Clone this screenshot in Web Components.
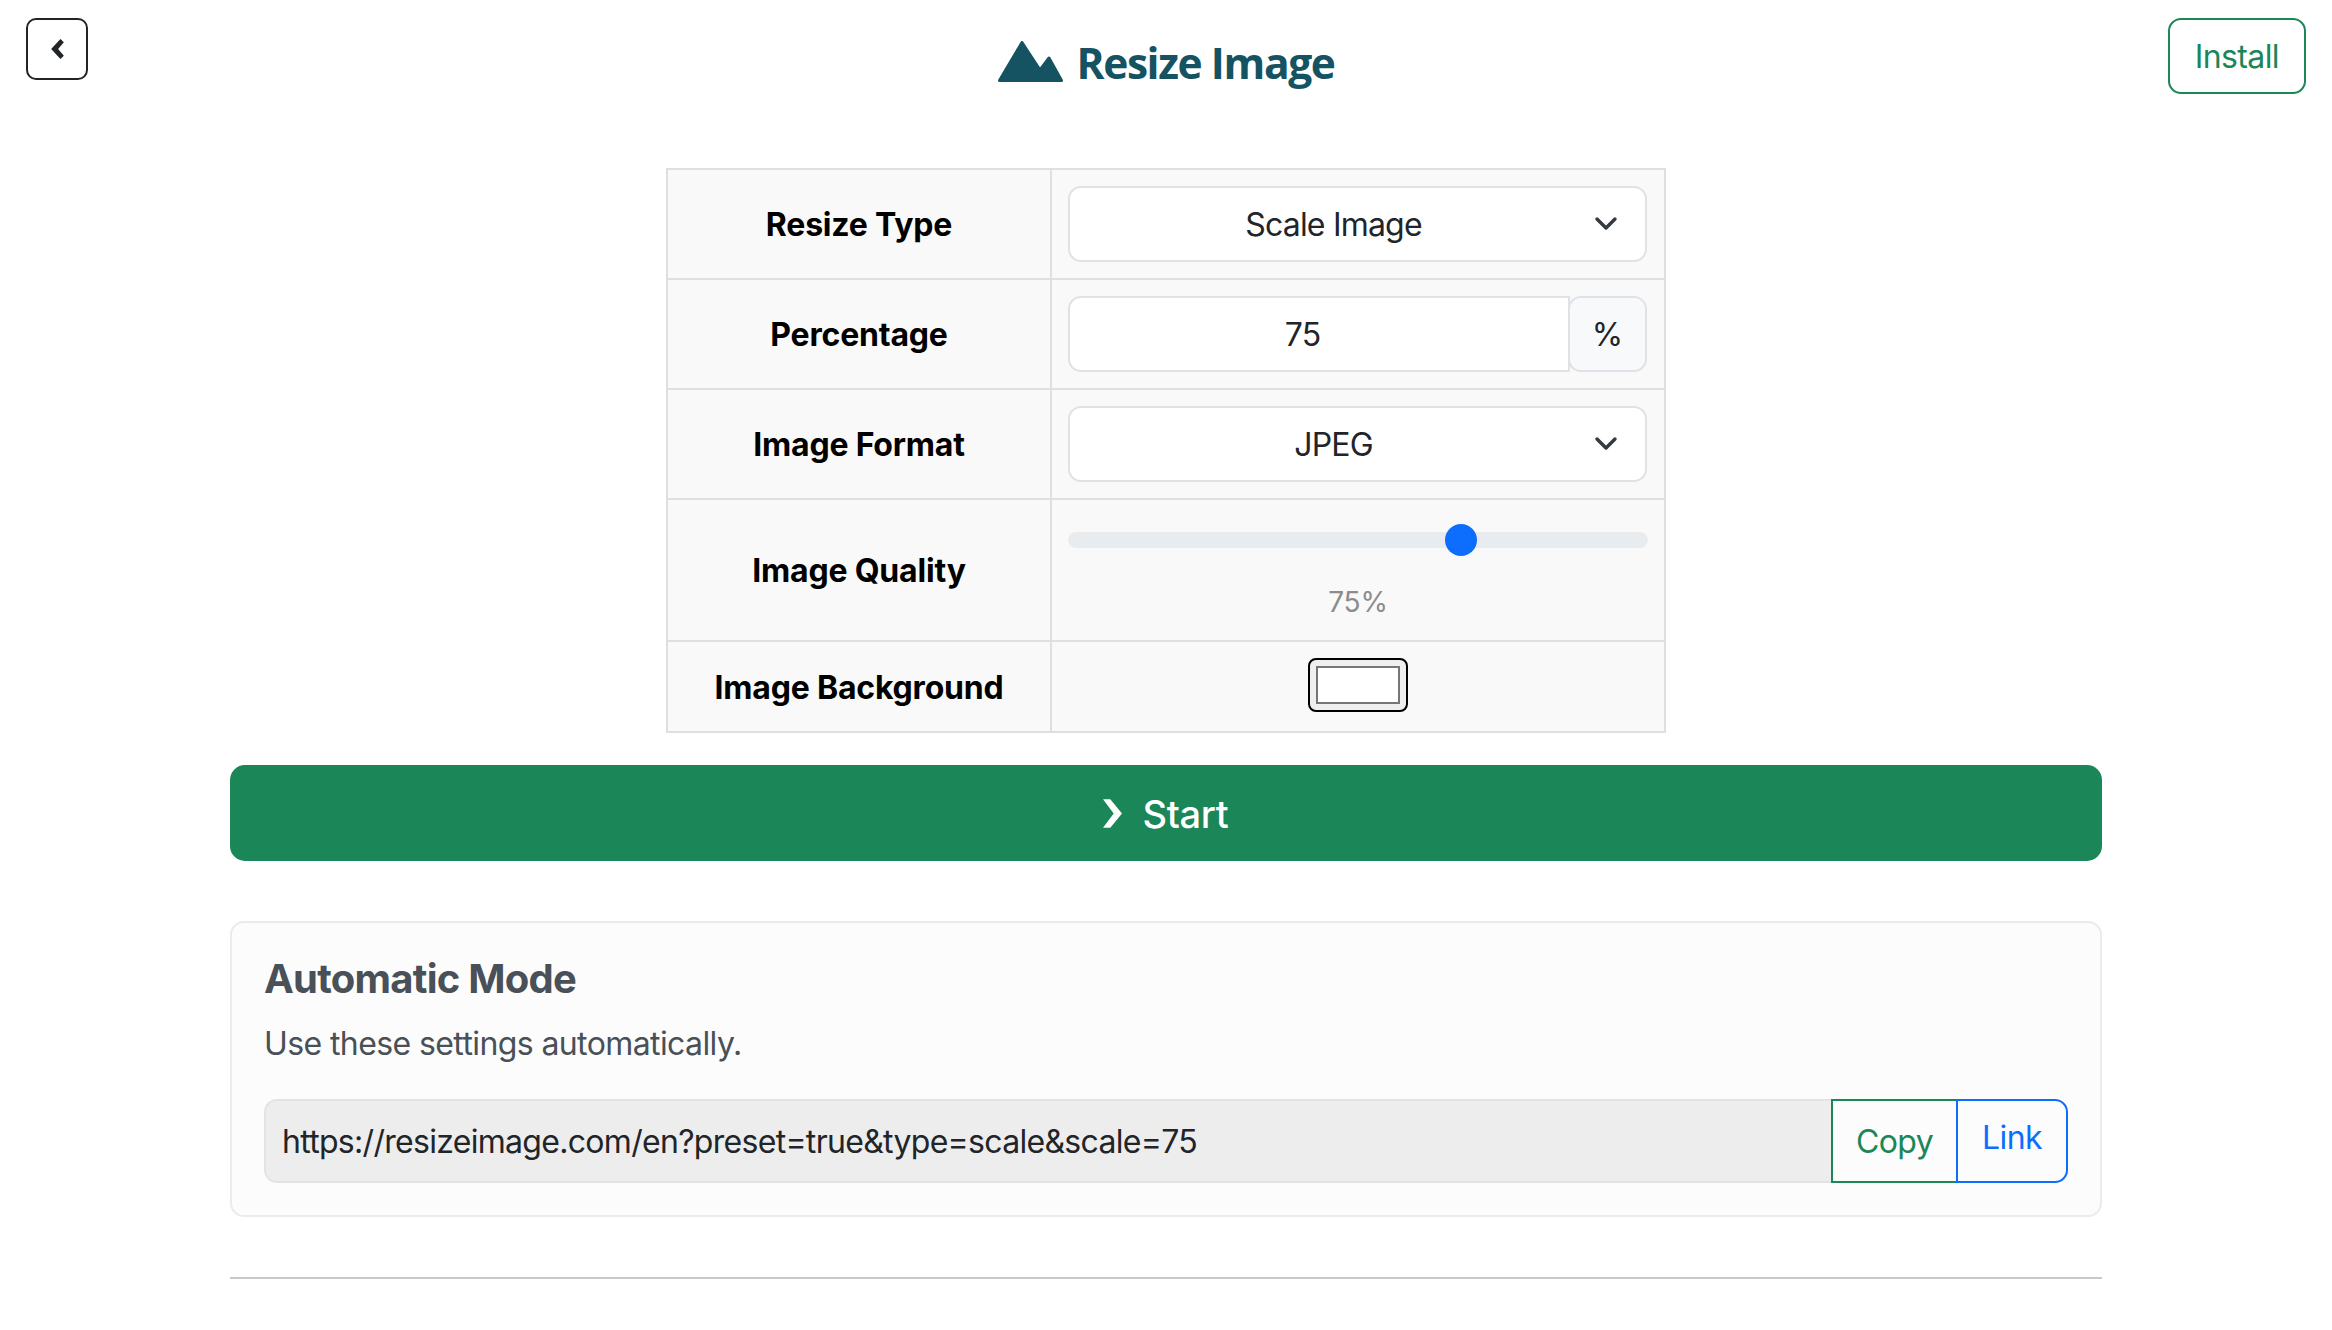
<!DOCTYPE html>
<html lang="en">
<head>
<meta charset="utf-8">
<title>Resize Image</title>
<style>
  html, body { margin: 0; padding: 0; background: #fff; }
  body { font-family: Inter, "Liberation Sans", sans-serif; font-size: 32px; line-height: 48px; color: #212529; }
</style>
</head>
<body>
<x-app>
  <x-header></x-header>
  <x-settings>
    <x-row label="Resize Type"><x-select>Scale Image</x-select></x-row>
    <x-row label="Percentage"><x-number value="75" unit="%"></x-number></x-row>
    <x-row label="Image Format"><x-select>JPEG</x-select></x-row>
    <x-row label="Image Quality"><x-quality value="75"></x-quality></x-row>
    <x-row label="Image Background"><x-swatch></x-swatch></x-row>
  </x-settings>
  <x-start>Start</x-start>
  <x-auto-card url="https://resizeimage.com/en?preset=true&amp;type=scale&amp;scale=75"></x-auto-card>
  <x-rule></x-rule>
</x-app>
<script>
function def(name, css, html, setup) {
  customElements.define(name, class extends HTMLElement {
    constructor() {
      super();
      const root = this.attachShadow({ mode: 'open' });
      root.innerHTML = '<style>' + css + '</style>' + html;
    }
    connectedCallback() { if (setup) setup(this, this.shadowRoot); }
  });
}

def('x-app', `
  :host { display: block; width: 1872px; margin: 0 auto; }
`, `<slot></slot>`);

def('x-header', `
  :host { display: grid; grid-template-columns: 1fr auto 1fr; align-items: start; height: 150px; padding-top: 18px;
          margin: 0 -230px; padding-left: 26px; padding-right: 26px; }
  .back { box-sizing: border-box; width: 62px; height: 62px; border: 2px solid #212529; border-radius: 10px;
          display: flex; align-items: center; justify-content: center; background: #fff; }
  .logo { display: flex; align-items: flex-start; gap: 14px; padding-top: 23px; }
  .logo span { font: 700 42.5px/48px "Open Sans", sans-serif; letter-spacing: -1.4px; color: #155362; margin-top: -2px; white-space: nowrap; }
  .install { justify-self: end; box-sizing: border-box; height: 76px; padding: 13px 25px 0; border: 2px solid #1b8657;
             border-radius: 13px; color: #1b8657; font-size: 32px; line-height: 48px; letter-spacing: -0.6px; }
`, `
  <div class="back"><svg width="13" height="20" viewBox="0 0 12.7 20"><polygon fill="#212529" points="0,10 9.3,0 12.7,3.3 7,10 12.7,16.7 9.3,20"/></svg></div>
  <div class="logo">
    <svg width="65" height="41" viewBox="0 0 65 41"><path fill="#155362" stroke="#155362" stroke-width="3" stroke-linejoin="round" d="M1.5 39.5 24 1.5 42 29 51 17 63.5 39.5Z"/></svg>
    <span>Resize Image</span>
  </div>
  <div class="install">Install</div>
`);

def('x-settings', `
  :host { display: block; box-sizing: border-box; width: 1000px; margin: 0 auto; border: 2px solid #dfdfdf; background: #f9f9f9; }
`, `<slot></slot>`);

def('x-row', `
  :host { display: grid; grid-template-columns: 382px 1fr; border-bottom: 2px solid #dfdfdf; }
  :host(:last-child) { border-bottom: 0; }
  .label { display: flex; align-items: center; justify-content: center; font-weight: 700; color: #000; letter-spacing: -0.2px; padding-top: 2px; }
  .value { box-sizing: border-box; border-left: 2px solid #dfdfdf; padding: 16px; min-width: 0; }
`, `<div class="label"></div><div class="value"><slot></slot></div>`,
(el, root) => { root.querySelector('.label').textContent = el.getAttribute('label'); });

def('x-select', `
  :host { display: flex; box-sizing: border-box; height: 76px; margin-right: 1px; align-items: center; background: #fff; border: 2px solid #dfe2e6;
          border-radius: 13px; padding: 0 27px 0 22px; color: #212529; letter-spacing: -0.8px; }
  .t { flex: 1; text-align: center; padding-top: 2px; }
  svg { margin-left: 19px; flex: none; }
`, `<div class="t"><slot></slot></div>
    <svg width="24" height="16" viewBox="0 0 24 16"><path d="M3 3l9 9 9-9" fill="none" stroke="#343a40" stroke-width="3.4" stroke-linecap="round" stroke-linejoin="round"/></svg>`);

def('x-number', `
  :host { display: flex; height: 76px; margin-right: 1px; }
  .in { box-sizing: border-box; width: 502px; background: #fff; border: 2px solid #dfe2e6; border-radius: 13px 0 0 13px;
        display: flex; align-items: center; justify-content: center; padding: 2px 55px 0 22px; letter-spacing: -0.8px; }
  .un { box-sizing: border-box; flex: 1; margin-left: -2px; background: #f8f9fa; border: 2px solid #dfe2e6; border-radius: 13px;
        display: flex; align-items: center; justify-content: center; padding-top: 2px; }
`, `<div class="in"></div><div class="un"></div>`,
(el, root) => {
  root.querySelector('.in').textContent = el.getAttribute('value');
  root.querySelector('.un').textContent = el.getAttribute('unit');
});

def('x-quality', `
  :host { display: block; height: 108px; }
  input { -webkit-appearance: none; appearance: none; display: block; width: 100%; height: 48px; margin: 0; padding: 0; background: transparent; }
  input::-webkit-slider-runnable-track { height: 16px; background: #e9ecef; border-radius: 16px; }
  input::-webkit-slider-thumb { -webkit-appearance: none; appearance: none; width: 32px; height: 32px; margin-top: -8px; border: 0; border-radius: 50%; background: #0d6efd; }
  .v { margin-top: 17px; text-align: center; font-size: 28px; line-height: 42px; color: #8c8c8c; letter-spacing: -0.2px; }
`, `<input type="range" min="20" max="100" value="75" aria-label="Image Quality"><div class="v"></div>`,
(el, root) => { root.querySelector('.v').textContent = el.getAttribute('value') + '%'; });

def('x-swatch', `
  :host { display: flex; justify-content: center; height: 57px; margin-right: 1px; }
  .b { box-sizing: border-box; width: 100px; height: 54px; border: 2px solid #000; border-radius: 8px; background: #efefef; padding: 6px 6px; }
  .i { box-sizing: border-box; height: 38px; margin-top: 0; border: 2.5px solid #767676; background: #fff; }
`, `<div class="b"><div class="i"></div></div>`);

def('x-start', `
  :host { display: flex; align-items: center; justify-content: center; gap: 20px; height: 96px; margin-top: 32px; background: #1b8657;
          border-radius: 15px; color: #fff; font-size: 38px; line-height: 48px; font-weight: 500; letter-spacing: -0.3px; }
  span { padding-top: 2px; }
`, `<svg width="19" height="29" viewBox="0 0 19 28.7"><polygon fill="#fff" points="0,0 7.3,0 19,14.3 7.3,28.7 0,28.7 10.7,14.3"/></svg><span><slot></slot></span>`);

def('x-auto-card', `
  :host { display: block; box-sizing: border-box; margin-top: 60px; height: 296px; padding: 32px; background: #fcfcfc;
          border: 2px solid #ebebee; border-radius: 14px; }
  h5 { margin: 0 0 17px; font-size: 40px; line-height: 48px; font-weight: 700; color: #495057; letter-spacing: -0.75px; }
  p { margin: 0 0 31px; color: #495057; letter-spacing: -0.6px; }
  .grp { display: flex; height: 84px; }
  .u { box-sizing: border-box; flex: 1; min-width: 0; background: #ededed; border: 2px solid #e2e3e6; border-right: 0; border-radius: 13px 0 0 13px;
       display: flex; align-items: center; padding: 2px 24px 0 16px; color: #212529; white-space: nowrap; letter-spacing: -0.7px; }
  .c { box-sizing: border-box; width: 127px; border: 2px solid #1b8657; color: #1b8657; display: flex; align-items: center; justify-content: center; padding-top: 2px; letter-spacing: -0.6px; }
  .l { box-sizing: border-box; width: 112px; margin-left: -2px; position: relative; border: 2px solid #0d6efd; border-radius: 0 13px 13px 0; color: #0d6efd; text-align: center; padding-top: 13px; letter-spacing: -0.6px; }
`, `<h5>Automatic Mode</h5><p>Use these settings automatically.</p>
    <div class="grp"><div class="u"></div><div class="c">Copy</div><div class="l">Link</div></div>`,
(el, root) => { root.querySelector('.u').textContent = el.getAttribute('url'); });

def('x-rule', `
  :host { display: block; height: 2px; margin-top: 60px; background: #c8c8c8; }
`, ``);
</script>
</body>
</html>
